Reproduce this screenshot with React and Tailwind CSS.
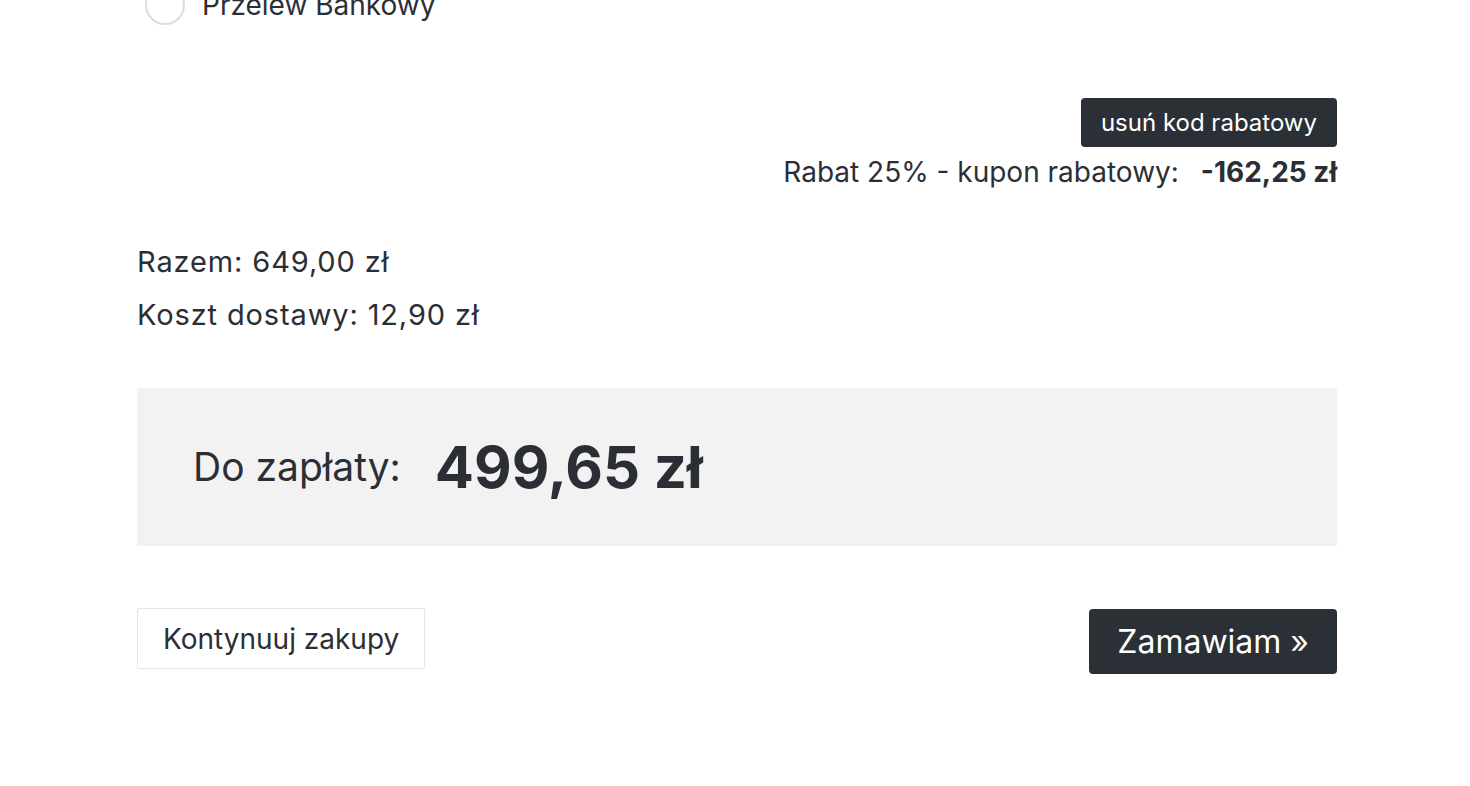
export default function App() {
  return (
    <div
      className="min-h-[786px] bg-white text-[#2b2f35] overflow-hidden"
      style={{ fontFamily: "Inter, 'Noto Sans', sans-serif" }}
    >
      <div className="w-[1200px] ml-[137px]">
        {/* payment method */}
        <div className="flex items-center gap-[17px] -mt-[15px] pl-2 h-10">
          <span className="w-10 h-10 rounded-full border-2 border-[#dcdcdc] bg-white" />
          <span className="text-[28px] leading-10">Przelew Bankowy</span>
        </div>

        {/* discount */}
        <div className="flex flex-col items-end mt-[73px]">
          <button className="h-[49px] px-5 rounded-[4px] bg-[#2b2f36] text-white text-[24px]">
            usuń kod rabatowy
          </button>
          <div className="mt-[7px] flex items-center gap-[22px] text-[28px] leading-[36px]">
            <span>Rabat 25% - kupon rabatowy:</span>
            <span className="font-bold">-162,25 zł</span>
          </div>
        </div>

        {/* totals */}
        <div className="mt-[45px] text-[29px] leading-[53px] tracking-[0.03em]">
          <div>Razem: 649,00 zł</div>
          <div>Koszt dostawy: 12,90 zł</div>
        </div>

        <div className="mt-[47px] h-[158px] bg-[#f2f2f2] flex items-center pl-14 gap-[34px]">
          <span className="text-[39px]">Do zapłaty:</span>
          <span className="text-[58px] font-bold">499,65 zł</span>
        </div>

        <div className="mt-[62px] flex justify-between items-start">
          <button className="h-[61px] px-[25px] border border-[#e6e6e6] rounded-[2px] bg-white text-[28px]">
            Kontynuuj zakupy
          </button>
          <button className="mt-px h-[65px] px-7 rounded-[4px] bg-[#2b2f36] text-white text-[32px]">
            Zamawiam »
          </button>
        </div>
      </div>
    </div>
  );
}
